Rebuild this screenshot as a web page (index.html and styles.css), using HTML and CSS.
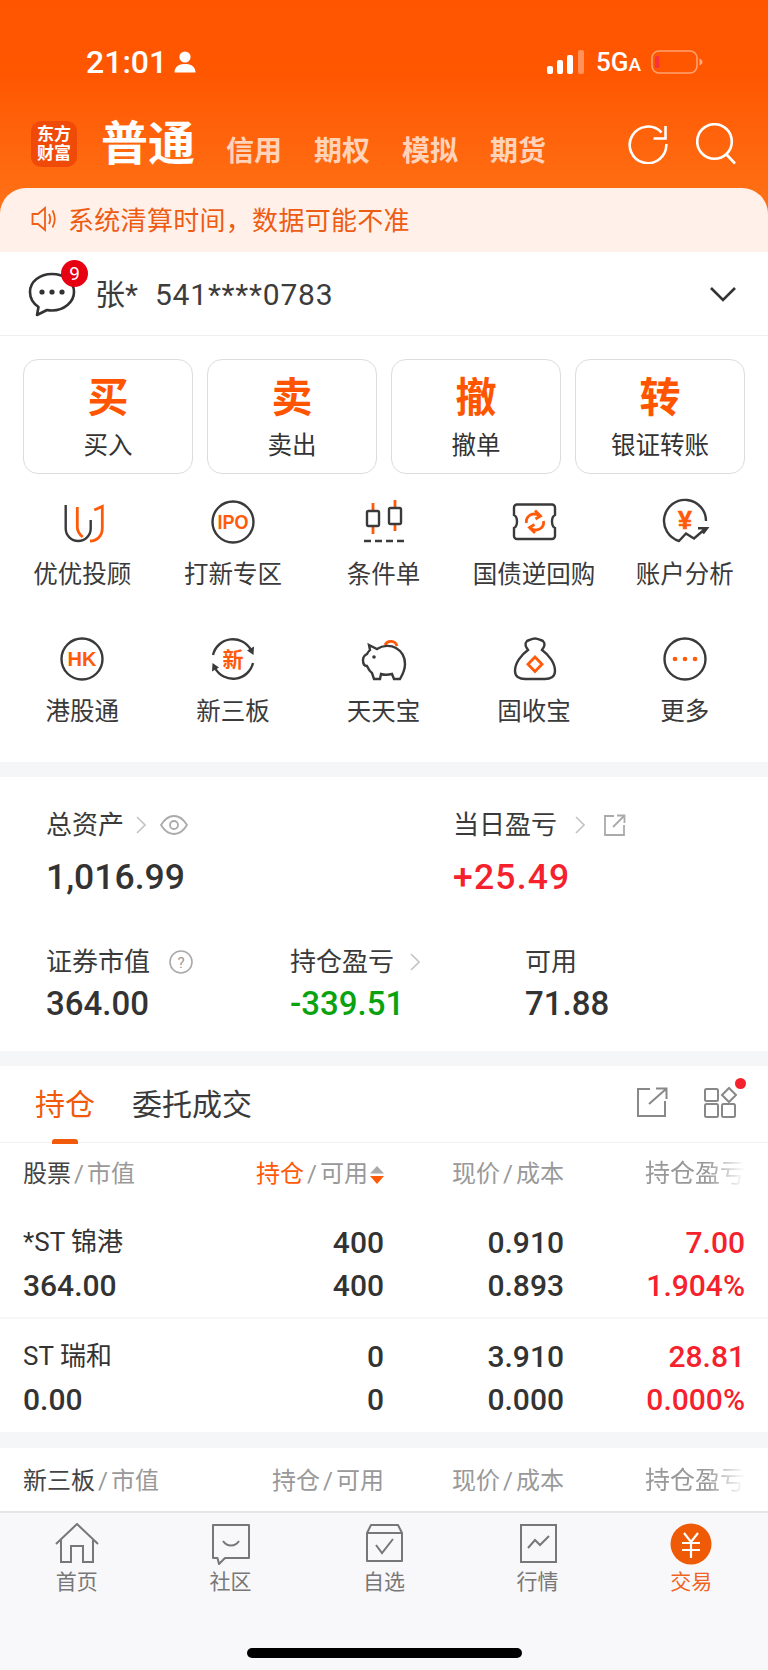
FILE: index.html
```html
<!DOCTYPE html>
<html lang="zh-CN">
<head>
    <meta charset="UTF-8">
    <meta name="viewport" content="width=device-width, initial-scale=1.0">
    <title>交易</title>
    <link rel="stylesheet" href="styles.css">
</head>
<body>
<div class="page">
    <header class="top">
        <div class="status">
            <span class="clock">21:01</span>
            <svg class="person" width="22" height="22" viewBox="0 0 22 22"><circle cx="11" cy="6" r="5.6" fill="#fff"/><path d="M0.5 21.5C0.5 15.5 5 13 11 13S21.5 15.5 21.5 21.5Z" fill="#fff"/></svg>
            <span class="status-gap"></span>
            <svg class="signal" width="38" height="24" viewBox="0 0 38 24"><rect x="0" y="16" width="6" height="8" rx="2" fill="#fff"/><rect x="10" y="10" width="6" height="14" rx="2" fill="#fff"/><rect x="20" y="5" width="6" height="19" rx="2" fill="#fff"/><rect x="31" y="0" width="6" height="24" rx="2" fill="#fff" opacity=".35"/></svg>
            <span class="net">5G<small>A</small></span>
            <svg class="battery" width="52" height="24" viewBox="0 0 52 24"><rect x="1" y="1" width="45" height="22" rx="7" fill="none" stroke="#fff" stroke-opacity=".45" stroke-width="1.6"/><rect x="4" y="6" width="4.5" height="12" rx="1.5" fill="#f8333c"/><path d="M48.500 8.500C50.500 9.500 51.500 10.500 51.500 12S50.500 14.500 48.500 15.500Z" fill="#fff" fill-opacity=".5"/></svg>
        </div>
        <div class="mode-bar">
            <div class="logo"><span>东方</span><span>财富</span></div>
            <div class="mode-main">普通</div>
            <a class="mode">信用</a>
            <a class="mode">期权</a>
            <a class="mode">模拟</a>
            <a class="mode">期货</a>
            <svg class="refresh" width="40" height="40" viewBox="0 0 40 40" fill="none" stroke="#fff" stroke-width="2.6"><path d="M33.500 8.500A18.300 18.300 0 1 0 38.300 20"/><path d="M25.500 14.500H37.500V2"/></svg>
            <svg class="search" width="40" height="42" viewBox="0 0 40 42" fill="none" stroke="#fff" stroke-width="2.6"><circle cx="18.500" cy="18.500" r="17.300"/><path d="M30 31L39 40.500"/></svg>
        </div>
        <div class="notice">
            <svg width="26" height="26" viewBox="0 0 26 26" fill="none" stroke="#ee6018" stroke-width="1.8"><path d="M1.500 8H7L14 2V24L7 18H1.500Z"/><path d="M18 8C19.500 11 19.500 15 18 18"/><path d="M21.500 4.500C24.500 10 24.500 16 21.500 21.500"/></svg>
            <span>系统清算时间，数据可能不准</span>
        </div>
    </header>

    <section class="account">
        <div class="chat">
            <svg width="48" height="48" viewBox="0 0 48 48" fill="none"><path d="M24 4C12 4 2 11.500 2 22C2 29 6 34 10.500 37L9 45L19 40C21 40.500 22.500 40.500 24 40.500C36 40.500 46 32 46 22C46 11.500 36 4 24 4Z" stroke="#333" stroke-width="2.600" stroke-linejoin="round"/><circle cx="14" cy="22" r="2.600" fill="#333"/><circle cx="24" cy="22" r="2.600" fill="#333"/><circle cx="34" cy="22" r="2.600" fill="#333"/></svg>
            <span class="badge">9</span>
        </div>
        <div class="account-name"><span>张*</span><span>541****0783</span></div>
        <svg class="chevron-down" width="28" height="16" viewBox="0 0 28 16" fill="none" stroke="#333" stroke-width="2.600"><path d="M2 2L14 14L26 2"/></svg>
    </section>

    <section class="panel">
        <div class="trade-btns">
            <a class="trade-btn"><b>买</b><span>买入</span></a>
            <a class="trade-btn"><b>卖</b><span>卖出</span></a>
            <a class="trade-btn"><b>撤</b><span>撤单</span></a>
            <a class="trade-btn"><b>转</b><span>银证转账</span></a>
        </div>
        <div class="tools">
            <a class="tool">
                <svg class="ico" viewBox="0 0 44 44"><path class="k" d="M5.700 5V28.500A12.500 12.500 0 0 0 30.700 28.500V20"/><path class="o" d="M17.300 7V27C17.300 31 19 34 22.700 37"/><path class="o" d="M34.300 10L42.300 6.500V28C42.300 36 37 41 30 41"/></svg>
                <span>优优投顾</span>
            </a>
            <a class="tool">
                <svg class="ico" viewBox="0 0 44 44"><circle class="k" cx="22" cy="22" r="20.500"/><text class="ico-text" x="22" y="29" font-size="20" textLength="31" lengthAdjust="spacingAndGlyphs">IPO</text></svg>
                <span>打新专区</span>
            </a>
            <a class="tool">
                <svg class="ico" viewBox="0 0 44 44"><path class="o" d="M12 3V11M12 26V34M34 0V8M34 24V31"/><rect class="k" x="6" y="11" width="12" height="15" rx="1.500"/><rect class="k" x="28" y="8" width="12" height="16" rx="1.500"/><path class="k" d="M3 41H10M14 41H21M25 41H32M36 41H43"/></svg>
                <span>条件单</span>
            </a>
            <a class="tool">
                <svg class="ico" viewBox="0 0 44 44"><path class="k" d="M5 4.500H40A3 3 0 0 1 43 7.500V15C39 17 39 26 43 28V36A3 3 0 0 1 40 39H5A3 3 0 0 1 2 36V28C6 26 6 17 2 15V7.500A3 3 0 0 1 5 4.500Z"/><path class="o" d="M14.500 23C13.500 17 19 12.500 25 14.500L28 16M31.500 21C32.500 27 27 31.500 21 29.500L18 28"/><path class="o" d="M23 10.500L28.500 16L23.500 19M23 33L17.500 27.500L22.500 24.500"/></svg>
                <span>国债逆回购</span>
            </a>
            <a class="tool">
                <svg class="ico" viewBox="0 0 44 44"><path class="k" d="M43 21A21 21 0 1 0 16 41L23 33.500L31 38.500L42 29M35 28.300H44L40 33.500"/><text class="ico-text ico-yen" x="22" y="29" font-size="25">¥</text></svg>
                <span>账户分析</span>
            </a>
            <a class="tool">
                <svg class="ico" viewBox="0 0 44 44"><circle class="k" cx="22" cy="22" r="20.500"/><text class="ico-text" x="22" y="29" font-size="20">HK</text></svg>
                <span>港股通</span>
            </a>
            <a class="tool">
                <svg class="ico" viewBox="0 0 44 44"><path class="k" d="M2 18A20.500 20.500 0 0 1 40 13M42 26A20.500 20.500 0 0 1 4 31"/><path class="fk" d="M36 13.500L43 9.500L42.500 18ZM8 30.500L1 34.500L1.500 26Z"/><text class="ico-text" x="22" y="30" font-size="21">新</text></svg>
                <span>新三板</span>
            </a>
            <a class="tool">
                <svg class="ico" viewBox="0 0 44 44"><path class="o" d="M24 8A6.500 6.500 0 0 1 36 9"/><path class="k" d="M8 8L16 12C22 8 30 8 35 11C41 14.500 44 20 44 27C44 32 42 37 39 42H33L31 37C27 38 23 38 20 37L19 42H13L11 36C8 34 7 31 6 29C3 29 2 27 2 23C2 20 4 18 6 17C7 15 8 14 9 13Z"/><circle class="fk" cx="13" cy="20" r="1.800"/></svg>
                <span>天天宝</span>
            </a>
            <a class="tool">
                <svg class="ico" viewBox="0 0 44 44"><path class="k" d="M16 13C14 10 12 7 15 4C18 3 20 1.500 23 1.500C26 1.500 28 3 31 4C34 7 32 10 30 13C37 18 43 26 43 34C43 40 38 42 33 42H13C8 42 3 40 3 34C3 26 9 18 16 13Z"/><path class="o" d="M23 20L30 27.300L23 34.500L16 27.300Z"/></svg>
                <span>固收宝</span>
            </a>
            <a class="tool">
                <svg class="ico" viewBox="0 0 44 44"><circle class="k" cx="22" cy="22" r="20.500"/><circle class="fo" cx="12" cy="22" r="2.300"/><circle class="fo" cx="22" cy="22" r="2.300"/><circle class="fo" cx="32" cy="22" r="2.300"/></svg>
                <span>更多</span>
            </a>
        </div>
    </section>

    <section class="assets">
        <div class="assets-top">
            <div class="stat stat-wide">
                <div class="stat-label">总资产
                    <svg class="arrow" width="10" height="18" viewBox="0 0 10 18"><path d="M1 1L9 9L1 17"/></svg>
                    <svg class="eye" width="28" height="20" viewBox="0 0 28 20" fill="none" stroke="#aaa" stroke-width="1.800"><path d="M1 10C5 3.500 9 1 14 1S23 3.500 27 10C23 16.500 19 19 14 19S5 16.500 1 10Z"/><circle cx="14" cy="10" r="4"/></svg>
                </div>
                <div class="stat-big">1,016.99</div>
            </div>
            <div class="stat">
                <div class="stat-label">当日盈亏
                    <svg class="arrow arrow-far" width="10" height="18" viewBox="0 0 10 18"><path d="M1 1L9 9L1 17"/></svg>
                    <svg class="share-small" width="23" height="23" viewBox="0 0 23 23" fill="none" stroke="#aaa" stroke-width="1.800"><path d="M11 2H2V21H21V11"/><path d="M10 13L21 2M14 1.500H21.500V9"/></svg>
                </div>
                <div class="stat-big up">+25.49</div>
            </div>
        </div>
        <div class="assets-bottom">
            <div class="stat stat-a">
                <div class="stat-label">证券市值
                    <svg class="help" width="24" height="24" viewBox="0 0 24 24" fill="none"><circle cx="12" cy="12" r="11" stroke="#aaa" stroke-width="1.600"/><text x="12" y="17.500" text-anchor="middle" font-size="15" fill="#999">?</text></svg>
                </div>
                <div class="stat-mid">364.00</div>
            </div>
            <div class="stat stat-b">
                <div class="stat-label">持仓盈亏
                    <svg class="arrow arrow-mid" width="10" height="18" viewBox="0 0 10 18"><path d="M1 1L9 9L1 17"/></svg>
                </div>
                <div class="stat-mid down">-339.51</div>
            </div>
            <div class="stat">
                <div class="stat-label">可用</div>
                <div class="stat-mid">71.88</div>
            </div>
        </div>
    </section>

    <section class="positions">
        <div class="tabs">
            <a class="tab tab-on">持仓</a>
            <a class="tab">委托成交</a>
            <svg class="tab-export" width="32" height="30" viewBox="0 0 32 30" fill="none" stroke="#888" stroke-width="2"><path d="M14 2H2V29H29V14"/><path d="M13 17L30 2M20 1.500H30.500V12"/></svg>
            <div class="tab-grid">
                <svg width="34" height="32" viewBox="0 0 34 32" fill="none" stroke="#888" stroke-width="2"><rect x="1" y="3" width="13" height="12" rx="1.500"/><rect x="1" y="18" width="13" height="13" rx="1.500"/><rect x="18" y="18" width="13" height="13" rx="1.500"/><path d="M25 2L32 9L25 16L18 9Z"/></svg>
                <span class="dot"></span>
            </div>
        </div>
        <div class="row row-head">
            <div><em>股票</em><i>/</i>市值</div>
            <div><u>持仓</u><i>/</i>可用<svg class="sort" width="16" height="20" viewBox="0 0 16 20"><path d="M8 1L15 8.500H1Z" fill="#aaa"/><path d="M8 19L1 11H15Z" fill="#ff5a0a"/></svg></div>
            <div>现价<i>/</i>成本</div>
            <div class="fade">持仓盈亏</div>
        </div>
        <div class="row row-stock row-line">
            <div class="name">*ST 锦港<br><span>364.00</span></div>
            <div>400<br>400</div>
            <div>0.910<br>0.893</div>
            <div class="up">7.00<br>1.904%</div>
        </div>
        <div class="row row-stock">
            <div class="name">ST 瑞和<br><span>0.00</span></div>
            <div>0<br>0</div>
            <div>3.910<br>0.000</div>
            <div class="up">28.81<br>0.000%</div>
        </div>
    </section>

    <section class="positions-b">
        <div class="row row-head row-head-b">
            <div><em>新三板</em><i>/</i>市值</div>
            <div>持仓<i>/</i>可用</div>
            <div>现价<i>/</i>成本</div>
            <div class="fade">持仓盈亏</div>
        </div>
    </section>

    <nav class="bottom-nav">
        <div class="nav-items">
            <a class="nav-item">
                <svg class="nav-ico" viewBox="0 0 44 42"><path d="M1 21L22 1L43 21"/><path d="M6 17V39H16V23H28V39H38V17"/></svg>
                <span>首页</span>
            </a>
            <a class="nav-item">
                <svg class="nav-ico" viewBox="0 0 44 42"><path d="M5 2H41V35H17L11 41L9.500 35H5Z" stroke-linejoin="round"/><path d="M15 18C19 24 27 24 31 18"/></svg>
                <span>社区</span>
            </a>
            <a class="nav-item">
                <svg class="nav-ico" viewBox="0 0 44 42"><path d="M5 10L9 2H36L40 10V38H5Z" stroke-linejoin="round"/><path d="M5 10H40"/><path d="M14 22L20 30L31 16"/></svg>
                <span>自选</span>
            </a>
            <a class="nav-item">
                <svg class="nav-ico" viewBox="0 0 44 42"><rect x="5" y="2" width="35" height="37"/><path d="M12 25L19 17L24 22L33 13"/></svg>
                <span>行情</span>
            </a>
            <a class="nav-item nav-on">
                <svg class="nav-ico-on" viewBox="0 0 44 42"><circle cx="22" cy="21" r="20.500" fill="#ee5a06"/><path d="M15 10L22 19L29 10M13 20H31M13 27H31M22 19V35" fill="none" stroke="#fff" stroke-width="2.200"/></svg>
                <span>交易</span>
            </a>
        </div>
        <div class="home-bar"></div>
    </nav>
</div>
</body>
</html>
```

FILE: styles.css
```css
* {
    box-sizing: border-box;
}
body {
    margin: 0;
    background-color: #f5f6f8;
    color: #333;
    font-family: Roboto, "Noto Sans CJK SC", sans-serif;
}
.page {
    width: 768px;
    height: 1670px;
    overflow: hidden;
    display: flex;
    flex-direction: column;
}

/* top */
.top {
    height: 252px;
    flex: none;
    padding-top: 44px;
    background: linear-gradient(#ff5500 0, #ff5600 70px, #ff7a1e 252px);
    color: white;
}
.status {
    height: 36px;
    padding: 0 65px 0 86px;
    display: flex;
    align-items: center;
}
.clock {
    font-size: 32px;
    font-weight: 500;
    margin-right: 7px;
}
.status-gap {
    flex: 1;
}
.signal {
    margin-right: 11px;
}
.net {
    font-size: 26px;
    font-weight: 500;
    width: 55px;
}
.net small {
    font-size: 19px;
}
.mode-bar {
    height: 56px;
    margin-top: 36px;
    padding-left: 31px;
    display: flex;
    align-items: center;
}
.logo {
    width: 46px;
    height: 46px;
    border-radius: 10px;
    background-color: #f04a08;
    display: flex;
    flex-direction: column;
    align-items: center;
    justify-content: center;
    font-size: 17px;
    font-weight: 700;
    line-height: 19px;
    margin-right: 24px;
}
.mode-main {
    font-size: 47px;
    font-weight: 700;
    width: 94px;
    margin-right: 31px;
    line-height: 56px;
}
.mode {
    font-size: 28px;
    font-weight: 700;
    width: 56px;
    margin-right: 32px;
    color: rgba(255,255,255,0.72);
    line-height: 40px;
    padding-top: 15px;
    white-space: nowrap;
}
.refresh {
    margin-left: 50px;
}
.search {
    margin-left: 28px;
}
.notice {
    height: 64px;
    margin-top: 16px;
    padding: 0 0 3px 31px;
    background-color: #fff1ea;
    border-radius: 26px 26px 0 0;
    display: flex;
    align-items: center;
    color: #ee5c14;
    font-size: 26px;
}
.notice span {
    margin-left: 11px;
    letter-spacing: 0.3px;
}

/* account */
.account {
    height: 84px;
    flex: none;
    background-color: white;
    border-bottom: 1px solid #eee;
    display: flex;
    align-items: center;
    padding: 0 31px 0 28px;
}
.chat {
    position: relative;
    width: 48px;
    height: 48px;
    margin-right: 19px;
}
.badge {
    position: absolute;
    left: 33px;
    top: -10px;
    width: 27px;
    height: 27px;
    border-radius: 50%;
    background-color: #e60012;
    color: white;
    font-size: 19px;
    line-height: 27px;
    text-align: center;
}
.account-name {
    flex: 1;
    font-size: 30px;
    color: #3c3c3c;
    display: flex;
    align-items: baseline;
    gap: 17px;
    padding-bottom: 4px;
}
.account-name span:last-child {
    letter-spacing: 0.800px;
}

/* buttons and tools */
.panel {
    height: 426px;
    flex: none;
    background-color: white;
    padding-top: 23px;
}
.trade-btns {
    display: flex;
    gap: 14px;
    padding: 0 23px;
}
.trade-btn {
    width: 170px;
    height: 115px;
    border: 1px solid #dcdcdc;
    border-radius: 15px;
    display: flex;
    flex-direction: column;
    align-items: center;
    padding-top: 13px;
}
.trade-btn b {
    font-size: 41px;
    line-height: 50px;
    color: #ff5500;
}
.trade-btn span {
    font-size: 24.500px;
    line-height: 34px;
    margin-top: 6px;
}
.tools {
    display: grid;
    grid-template-columns: repeat(5, 150.6px);
    padding: 0 7px;
    margin-top: 26px;
    row-gap: 27px;
}
.tool {
    height: 110px;
    display: flex;
    flex-direction: column;
    align-items: center;
    font-size: 24.500px;
    color: #3a3a3a;
}
.tool span {
    margin-top: 13px;
    line-height: 36px;
    white-space: nowrap;
}
.ico {
    width: 44px;
    height: 44px;
    overflow: visible;
    fill: none;
    stroke-width: 2.400;
}
.k {
    stroke: #3a3a3a;
    fill: none;
}
.o {
    stroke: #ff5a0a;
    fill: none;
    stroke-width: 2.800;
}
.fk {
    fill: #3a3a3a;
}
.fo {
    fill: #ff5a0a;
}
.ico-text {
    fill: #ff5a0a;
    font-family: "Liberation Sans", "Noto Sans CJK SC", sans-serif;
    font-weight: 700;
    text-anchor: middle;
}
.ico-yen {
    stroke: #ff5a0a;
    stroke-width: 0.6;
}

/* assets */
.assets {
    height: 274px;
    flex: none;
    margin-top: 15px;
    background-color: white;
    padding: 30px 0 0 46px;
}
.assets-top {
    display: flex;
    height: 137px;
}
.assets-bottom {
    display: flex;
}
.stat-wide {
    width: 407px;
}
.stat-a {
    width: 244px;
}
.stat-b {
    width: 235px;
}
.stat-label {
    font-size: 26px;
    line-height: 36px;
    color: #3a3a3a;
    display: flex;
    align-items: center;
    height: 36px;
}
.stat-big {
    font-size: 35.500px;
    font-weight: 500;
    line-height: 48px;
    margin-top: 10px;
    color: #333;
}
.stat-big.up {
    color: #f5222d;
    letter-spacing: 1.200px;
}
.stat-mid {
    font-size: 33px;
    font-weight: 500;
    line-height: 42px;
    margin-top: 3px;
    color: #333;
}
.arrow {
    margin-left: 12px;
    fill: none;
    stroke: #c4c4c4;
    stroke-width: 1.600;
}
.arrow-far {
    margin-left: 18px;
}
.arrow-mid {
    margin-left: 16px;
}
.eye {
    margin-left: 14px;
}
.share-small {
    margin-left: 18px;
}
.help {
    margin-left: 19px;
}
.up {
    color: #f5222d;
}
.stat-mid.down {
    color: #0aa30f;
}

/* positions */
.positions {
    height: 366px;
    flex: none;
    margin-top: 15px;
    background-color: white;
}
.tabs {
    height: 77px;
    display: flex;
    align-items: center;
    padding: 0 0 5px 35px;
    border-bottom: 1px solid #f0f0f0;
}
.tab {
    font-size: 30px;
    color: #3a3a3a;
    margin-right: 37px;
}
.tab-on {
    color: #f05a0a;
    position: relative;
}
.tab-on::after {
    content: "";
    position: absolute;
    left: 17px;
    bottom: -20px;
    width: 26px;
    height: 5px;
    border-radius: 3px 3px 0 0;
    background-color: #f05a0a;
}
.tab-export {
    margin-left: auto;
    margin-right: 36px;
}
.tab-grid {
    position: relative;
    margin-right: 30px;
    height: 32px;
}
.dot {
    position: absolute;
    right: -8px;
    top: -8px;
    width: 11px;
    height: 11px;
    border-radius: 50%;
    background-color: #f5222d;
}
.row {
    display: grid;
    grid-template-columns: 201px 160px 180px 181px;
    padding: 0 23px;
    text-align: right;
}
.row > div:first-child {
    text-align: left;
}
.row-head {
    height: 56px;
    align-items: center;
    font-size: 24px;
    color: #999;
    white-space: nowrap;
}
.row-head-b {
    height: 60px;
}
.row-head em {
    font-style: normal;
    color: #444;
}
.row-head u {
    text-decoration: none;
    color: #ff5a0a;
}
.row-head i {
    font-style: normal;
    margin: 0 3px;
}
.sort {
    vertical-align: -3px;
    margin-left: 1px;
    margin-right: -1px;
}
.fade {
    -webkit-mask-image: linear-gradient(to right, #000 62%, rgba(0,0,0,0.1) 96%);
    mask-image: linear-gradient(to right, #000 62%, rgba(0,0,0,0.1) 96%);
}
.row-head .fade {
    width: 100px;
    font-size: 25px;
    justify-self: end;
}
.row-stock {
    height: 113px;
    padding-top: 16px;
    font-size: 30px;
    font-weight: 500;
    line-height: 43px;
    color: #333;
}
.row-stock .up {
    color: #f5222d;
}
.row-line {
    height: 120px;
    padding-top: 22px;
    border-bottom: 2px solid #f6f7f9;
}
.name {
    font-weight: 400;
    font-size: 26px;
}
.name span {
    font-weight: 500;
    font-size: 30px;
}
.positions-b {
    height: 63px;
    flex: none;
    margin-top: 16px;
    background-color: white;
}

/* bottom nav */
.bottom-nav {
    flex: 1;
    background-color: #f8f8fa;
    border-top: 2px solid #e6e6e8;
    display: flex;
    flex-direction: column;
    align-items: center;
}
.nav-items {
    width: 100%;
    display: grid;
    grid-template-columns: repeat(5, 1fr);
    padding-top: 10px;
}
.nav-item {
    display: flex;
    flex-direction: column;
    align-items: center;
    font-size: 21px;
    color: #777;
}
.nav-item span {
    line-height: 28px;
    margin-top: 3px;
}
.nav-ico {
    width: 44px;
    height: 42px;
    fill: none;
    stroke: #777;
    stroke-width: 2;
}
.nav-ico-on {
    width: 44px;
    height: 42px;
}
.nav-on {
    color: #f0641e;
}
.home-bar {
    width: 275px;
    height: 10px;
    border-radius: 5px;
    background-color: black;
    margin-top: 52px;
}
```
